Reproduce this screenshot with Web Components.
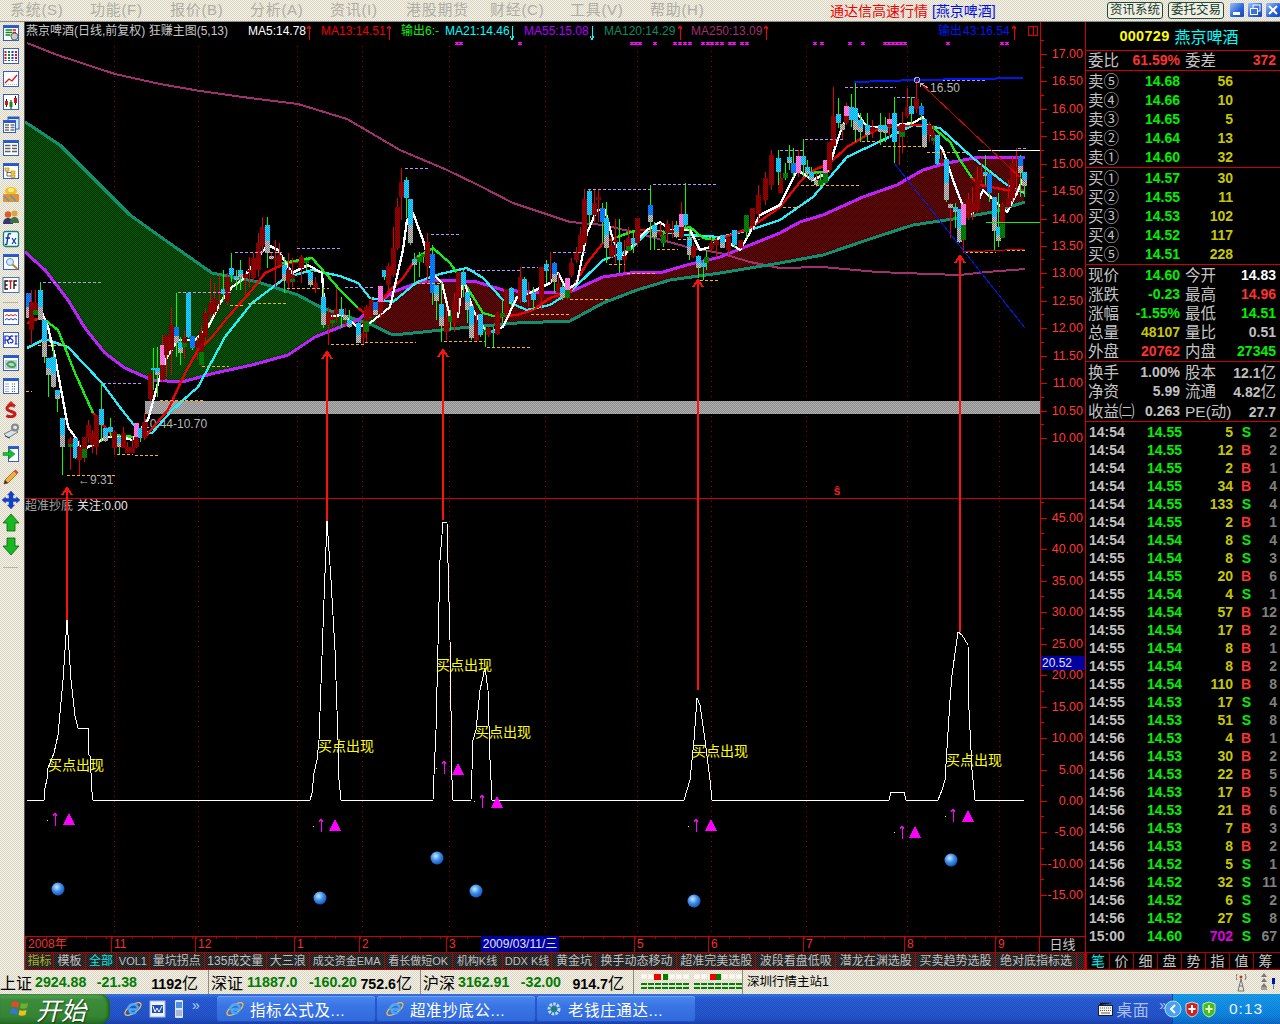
<!DOCTYPE html>
<html lang="zh"><head><meta charset="utf-8"><title>通达信</title>
<style>
html,body{margin:0;padding:0;background:#000;overflow:hidden}
body{width:1280px;height:1024px;font-family:"Liberation Sans","Noto Sans CJK SC",sans-serif}
</style></head><body>
<tdx-app></tdx-app>
<script>
const CJK='"Liberation Sans","Noto Sans CJK SC",sans-serif';
const SANS='"Liberation Sans","Noto Sans CJK SC",sans-serif';
const DITHER='repeating-conic-gradient(#f6f3e6 0 25%,#d9d5c5 0 50%) 0 0/2px 2px';
function def(name,css,html,init){
  customElements.define(name,class extends HTMLElement{
    connectedCallback(){
      if(this.shadowRoot)return;
      const r=this.attachShadow({mode:'open'});
      r.innerHTML='<style>'+css+'</style>'+(typeof html==='function'?html(this):html);
      if(init)init(r,this);
    }
  });
}

/* ---------- menu ---------- */
def('menu-item',`:host{display:block;width:80px;font:15px ${CJK};color:#aeaea4;white-space:nowrap;line-height:20px;letter-spacing:.7px}`,'<slot></slot>');
def('win-btn',`:host{display:block;width:16px;height:16px;border-radius:2px;background:linear-gradient(135deg,#9cc0f4,#2a62d8 60%,#1a46b0);border:1px solid #dfe6f0;box-sizing:border-box}svg{display:block}`,
 h=>{const k=h.getAttribute('k');const d={min:'<rect x="3" y="9" width="7" height="3" fill="#fff"/>',max:'<rect x="5" y="2" width="7" height="6" fill="none" stroke="#fff"/><rect x="2.5" y="5.5" width="7" height="6" fill="#3a70e0" stroke="#fff"/>',cls:'<path d="M3 3l8 8M11 3l-8 8" stroke="#fff" stroke-width="2"/>'}[k];return `<svg width="14" height="14" viewBox="0 0 14 14">${d}</svg>`});
def('menu-button',`:host{display:block;width:56px;height:17px;box-sizing:border-box;border:1px solid #1c4a3c;border-radius:3px;font:12.5px/15px ${CJK};color:#143c30;text-align:center;white-space:nowrap;background:#f2efe2}`,'<slot></slot>');
def('app-menubar',`:host{display:flex;align-items:center;height:22px;box-sizing:border-box;background:${DITHER};border-bottom:1px solid #8c8c84;padding:0 0 1px 10px}
 .m{display:flex}.t{width:277px;font:14px ${CJK};color:#f00000;white-space:nowrap}.t b{font-weight:400;color:#0010e0}
 .b{display:flex;gap:5px;margin-right:5px}.w{display:flex;gap:2px}`,
 `<div class="m"><menu-item>系统(S)</menu-item><menu-item>功能(F)</menu-item><menu-item>报价(B)</menu-item><menu-item>分析(A)</menu-item><menu-item>资讯(I)</menu-item><menu-item style="margin-left:-4px;margin-right:4px">港股期货</menu-item><menu-item>财经(C)</menu-item><menu-item>工具(V)</menu-item><menu-item>帮助(H)</menu-item></div>
 <div class="t" style="margin-left:100px;">通达信高速行情 <b>[燕京啤酒]</b></div>
 <div class="b"><menu-button>资讯系统</menu-button><menu-button>委托交易</menu-button></div>
 <div class="w"><win-btn k="min"></win-btn><win-btn k="max"></win-btn><win-btn k="cls"></win-btn></div>`);

/* ---------- toolbar icons ---------- */
const WIN='<rect x="1.5" y="1.5" width="15" height="15" fill="#fff" stroke="#3060d0"/><rect x="2" y="2" width="14" height="2" fill="#2858c8"/>';
const ICONS={
 list:`${WIN}<path d="M3.5 6h7M3.5 8.500h7M3.5 11h5" stroke="#0a8a20" stroke-width="1.500"/><path d="M11 6h3M11 8.500h3" stroke="#e01010" stroke-width="1.500"/><circle cx="12.500" cy="12.500" r="3.500" fill="#c8c8c8" stroke="#606060"/>`,
 grid:`<rect x="1.500" y="1.500" width="15" height="15" fill="#fff" stroke="#3060d0"/><path d="M3.500 4v10" stroke="#e01010" stroke-width="2" stroke-dasharray="2 1"/><path d="M7 4v10" stroke="#0a8a20" stroke-width="2" stroke-dasharray="2 1"/><path d="M10.500 4v10" stroke="#2030e0" stroke-width="2" stroke-dasharray="2 1"/><path d="M14 4v10" stroke="#e01010" stroke-width="2" stroke-dasharray="2 1"/>`,
 line:`<rect x="1.500" y="1.500" width="15" height="15" fill="#fff" stroke="#3060d0"/><path d="M3 13l4-4 3 2 5-6" fill="none" stroke="#e01010" stroke-width="1.300"/><path d="M2 14.500h14" stroke="#c0c0c0" stroke-dasharray="1 1"/>`,
 kline:`<rect x="1.500" y="1.500" width="15" height="15" fill="#fff" stroke="#3060d0"/><path d="M4.500 6v8M9 7v9M13.500 3v9" stroke="#111"/><rect x="3" y="8" width="3" height="4" fill="#e01010"/><rect x="7.500" y="9" width="3" height="5" fill="#0a8a20"/><rect x="12" y="5" width="3" height="5" fill="#e01010"/>`,
 wins:`<rect x="6" y="1" width="11" height="12" fill="#d8e8ff" stroke="#3060d0"/><rect x="6" y="1" width="11" height="2" fill="#2858c8"/><rect x="1.500" y="4.500" width="12" height="12" fill="#fff" stroke="#3060d0"/><rect x="2" y="5" width="11" height="2" fill="#2858c8"/><path d="M3 9h4M8.500 9h4M3 11.500h4M8.500 11.500h4M3 14h4M8.500 14h4" stroke="#707070" stroke-width="1.300"/>`,
 table:`${WIN}<path d="M3 6.500h5.500M10 6.500h5M3 9.500h5.500M10 9.500h5M3 12.500h5.500M10 12.500h5" stroke="#606060" stroke-width="1.600"/>`,
 tree:`${WIN}<rect x="3" y="6" width="4" height="3" fill="#f8d040" stroke="#b08000" stroke-width=".6"/><rect x="9" y="9" width="4" height="3" fill="#f8d040" stroke="#b08000" stroke-width=".6"/><rect x="9" y="13" width="4" height="2.500" fill="#f8d040" stroke="#b08000" stroke-width=".6"/><path d="M5 9v5h4M5 10.500h4" stroke="#303030" fill="none" stroke-width=".7"/>`,
 gold:`<ellipse cx="9" cy="6" rx="6" ry="4" fill="#f4c020"/><ellipse cx="9" cy="5" rx="3" ry="2" fill="#ffe880"/><rect x="1" y="9" width="16" height="8" rx="1" fill="#e89030"/><path d="M2 11l5 5M8 10l6 6" stroke="#40a0e0" stroke-width="1.500"/>`,
 people:`<circle cx="6" cy="6.500" r="3.200" fill="#d86020"/><path d="M1 16c0-4 2-6 5-6s5 2 5 6z" fill="#303870"/><circle cx="12.500" cy="5.500" r="3" fill="#e0a040"/><path d="M8 15c0-4 2-6 4.500-6s4.500 2 4.500 6z" fill="#407040"/>`,
 fx:`<rect x="1.500" y="1.500" width="15" height="15" rx="2" fill="#f4fff8" stroke="#108070" stroke-width="1.300"/><path d="M9 4c-2-1-3 0-3 2l-1 7c0 2-1 2-2 1M3.500 8H8" fill="none" stroke="#1030c0" stroke-width="1.400"/><path d="M10 8l4 6M14 8l-4 6" stroke="#1030c0" stroke-width="1.200"/>`,
 search:`${WIN}<circle cx="8" cy="9" r="3.500" fill="#d0ecff" stroke="#6090c0"/><path d="M10.500 11.500l5 4.500" stroke="#c08020" stroke-width="2"/>`,
 etf:`<rect x="1" y="1.500" width="16" height="15" fill="#fff" stroke="#4070c0"/><path d="M6 5H3v8h3M3 9h2.500" fill="none" stroke="#111" stroke-width="1.300"/><path d="M6.500 5h4M8.500 5v8" stroke="#e01010" stroke-width="1.400"/><path d="M15 5h-3v8M12 9h2.500" fill="none" stroke="#111" stroke-width="1.300"/>`,
 wave:`${WIN}<path d="M3 8l2-1.500 2 1.500 2-1.500 2 1.500 2-1.500 2 1.500" fill="none" stroke="#e01010"/><path d="M3 12l2-1.500 2 1.500 2-1.500 2 1.500 2-1.500 2 1.500" fill="none" stroke="#2030e0"/>`,
 rsi:`<rect x="1.500" y="1.500" width="15" height="15" fill="#fff" stroke="#3060d0"/><path d="M3 13V5h2.500a2 2 0 010 4H3M5 9l2 4M11 5.500c-1-1-3-.5-3 1 0 2 3 1.500 3 3.500 0 1.500-2 2.500-3 1M12.500 5h3M14 5v8M12.500 13h3" fill="none" stroke="#1020d0" stroke-width="1.200"/>`,
 recycle:`${WIN}<rect x="3" y="6" width="12" height="9" fill="#b8d0e0"/><path d="M5 10c2-3 6-3 8 0s-5 5-8 0z" fill="none" stroke="#40a040" stroke-width="1.800"/>`,
 cells:`${WIN}<path d="M3.500 7h4M10 7h4M3.500 9.500h4M10 9.500h4M3.500 12h4M10 12h4M3.500 14.500h4M10 14.500h4" stroke="#3060d0" stroke-dasharray="1 1"/>`,
 dollar:`<path d="M9 1l4 4H5z" fill="#e02020"/><path d="M13 6.500C11 5 5 5 5 8.500s8 2.500 8 5.500-6 3.500-8.500 1.500" fill="none" stroke="#c81818" stroke-width="3"/><path d="M13 7C11 6 6 6 6 8.500" fill="none" stroke="#808080" stroke-width=".7"/>`,
 tools:`<path d="M2 11l10-5 4 3-10 6z" fill="#d8e0e8" stroke="#707880"/><circle cx="13" cy="4.500" r="3" fill="none" stroke="#808890" stroke-width="2"/><path d="M3 13l5 2" stroke="#304060"/>`,
 enter:`<rect x="6.500" y="1.500" width="10" height="15" fill="#fff" stroke="#3060d0"/><rect x="7" y="2" width="9" height="2" fill="#2858c8"/><path d="M1 7.500h6V4l6 5-6 5v-3.500H1z" fill="#10c030" stroke="#088018" stroke-width=".5"/>`,
 pencil:`<path d="M2 16l1-4 9-9 3 3-9 9z" fill="#f0b040" stroke="#905010" stroke-width=".7"/><path d="M12 3l3 3 1.500-1.500-3-3z" fill="#e04040"/><path d="M2 16l1-4 3 3z" fill="#303030"/>`,
 move:`<path d="M9 0l3.500 4H11v3.500h3.500V6L18 9l-3.500 3v-1.500H11V14h1.500L9 18l-3.500-4H7v-3.500H3.500V12L0 9l3.500-3v1.500H7V4H5.500z" fill="#1040d0" stroke="#103090" stroke-width=".4"/>`,
 up:`<path d="M9 0l8 9h-4v8H5V9H1z" fill="#18b820" stroke="#0a6010" stroke-width=".8"/>`,
 down:`<path d="M9 18l8-9h-4V1H5v8H1z" fill="#18b820" stroke="#0a6010" stroke-width=".8"/>`
};
def('tool-icon',`:host{display:flex;height:22.900px;align-items:center;justify-content:center}svg{display:block}`,
 h=>`<svg width="18" height="18" viewBox="0 0 18 18">${ICONS[h.getAttribute('k')]}</svg>`);
const T1=['list','grid','line','kline','wins','table','tree','gold','people','fx','search','etf'],
      T2=['wave','rsi','recycle','cells','dollar','tools','enter','pencil','move','up','down'];
def('tool-strip',`:host{display:block;width:24px;background:${DITHER};border-right:1px solid #555;padding-right:0;box-sizing:content-box;padding-top:0}
 .s{height:8px;margin:0 3px 0;border-bottom:1px solid #b8b4a0;transform:translateY(-3px)}.w{padding-right:3px}`,
 `<div class="w">${T1.map(k=>`<tool-icon k="${k}"></tool-icon>`).join('')}<div class="s"></div>${T2.map(k=>`<tool-icon k="${k}"></tool-icon>`).join('')}<div class="s" style="transform:translateY(2px)"></div></div>`);

/* ---------- chart ---------- */
const MA250=[[27,43],[60,56],[115,74],[160,84],[200,91],[250,98],[298,104],[347,119],[400,150],[447,170],[480,186],[513,203],[570,222],[603,225],[637,233],[687,247],[720,253],[750,262],[780,268],[823,267],[877,272],[930,274],[960,275],[987,272],[1025,269]];
const MA120=[[25,122],[60,145],[100,185],[130,215],[165,240],[212,273],[258,282],[298,295],[322,308],[372,325],[393,335],[423,332],[460,328],[517,323],[570,321],[603,303],[637,290],[670,280],[720,273],[780,263],[823,255],[873,238],[913,225],[953,219],[993,212],[1025,202]];
const MA55=[[25,252],[45,270],[68,300],[85,328],[105,353],[125,368],[152,380],[182,382],[215,373],[252,365],[288,355],[315,337],[358,320],[375,305],[393,292],[417,283],[440,280],[477,282],[503,290],[543,293],[570,292],[603,277],[630,273],[663,272],[687,265],[720,257],[780,233],[800,222],[823,215],[863,197],[897,185],[923,170],[947,163],[980,157],[1025,158]];
const MA21=[[27,348],[45,339],[68,347],[85,365],[102,383],[122,410],[138,430],[152,433],[172,410],[198,387],[225,337],[252,303],[285,278],[312,270],[340,276],[358,283],[370,298],[393,302],[417,282],[440,274],[467,268],[483,278],[503,300],[527,310],[550,305],[570,292],[603,260],[630,250],[650,230],[687,235],[720,237],[750,230],[780,220],[813,197],[847,157],[883,140],[913,125],[940,128],[973,158],[1007,185],[1025,193]];
const MA13=[[27,323],[40,318],[45,320],[58,330],[75,373],[93,413],[112,435],[135,437],[145,437],[168,410],[185,373],[198,350],[212,337],[228,317],[252,290],[265,273],[282,265],[312,258],[340,290],[358,308],[370,317],[390,290],[403,278],[417,257],[433,248],[450,263],[467,287],[483,313],[497,317],[517,315],[533,310],[550,298],[570,292],[587,263],[603,243],[617,237],[637,230],[650,230],[663,233],[690,227],[703,238],[717,240],[750,228],[780,207],[800,182],[808,173],[830,163],[847,147],[867,135],[880,128],[913,125],[930,125],[950,142],[960,160],[972,178],[980,185],[1007,190],[1025,190]];
const G13=[[[45,320],[58,330],[75,373],[93,413]],[[112,435],[135,437]],[[282,263],[312,258],[340,290],[358,308]],[[417,257],[433,248],[450,263],[467,287],[483,313],[497,317]],[[617,237],[637,230]],[[663,233],[690,227],[703,238],[717,240]],[[808,173],[825,172]],[[930,125],[950,142],[960,160],[972,178]]];
const MA5=[[40,308],[48,327],[55,357],[63,400],[68,427],[75,437],[82,450],[108,437],[122,437],[132,440],[148,420],[158,383],[167,357],[178,340],[195,340],[208,327],[222,300],[232,287],[242,280],[258,257],[268,245],[278,250],[292,273],[308,265],[322,273],[325,317],[342,315],[358,327],[370,323],[390,307],[403,250],[407,220],[413,213],[423,240],[432,273],[442,283],[450,317],[458,317],[463,277],[473,310],[487,333],[503,327],[517,297],[530,293],[550,283],[558,273],[567,290],[577,283],[587,233],[597,210],[605,210],[613,240],[623,257],[637,240],[647,230],[660,222],[670,230],[690,230],[700,250],[710,247],[720,237],[740,250],[760,215],[780,205],[797,170],[813,180],[827,173],[840,133],[847,117],[857,113],[867,127],[880,127],[913,123],[923,117],[930,133],[943,150],[953,180],[967,217],[973,213],[983,190],[997,203],[1007,212],[1017,193],[1025,173]];
const LOW=[[27,800],[44,800],[45,788],[47,779],[48,768],[52,758],[54,753],[58,735],[63,680],[67,620],[71,680],[75,716],[78,728],[88,728],[89,755],[90,756],[91,773],[92,792],[93,800],[310,800],[312,793],[314,773],[317,760],[319,740],[324,600],[327,521],[331,580],[335,650],[338,740],[339,780],[341,800],[433,800],[434,775],[436,730],[440,560],[443,522],[447,523],[450,640],[452,780],[453,800],[471,800],[473,740],[476,730],[480,690],[485,668],[488,690],[490,760],[492,800],[684,800],[690,780],[694,740],[697,698],[700,705],[705,740],[710,780],[712,800],[889,800],[891,792],[904,792],[906,800],[938,800],[942,790],[945,780],[950,700],[952,675],[958,632],[962,635],[968,645],[969,710],[972,770],[975,800],[1024,800]];
const C9=[[8,160,235,'bg'],[18,185,270,'r',150,315],[31,190,225,'rg',150,225],[46,150,240,'cg',125,240],[58,240,350,'cg'],[70,355,405,'cg',355,470],[85,350,440,'cg',310,445],[97,450,478,'cg',450,515],[112,535,622,'cg',535,705],[136,598,622,'rg',590,690],[150,595,655,'c'],[162,620,660,'r',600,705],[176,590,655,'rg'],[190,555,595,'r',540,610],[202,580,615,'r',570,640],[214,525,620,'r',525,645],[229,508,555,'c',430,605],[241,565,602,'cg',565,605],[254,560,575,'c',535,590],[268,575,625,'r',570,645],[281,590,622,'cg',588,645],[293,580,625,'r',560,625],[306,622,638,'r',605,640],[320,620,640,'r',590,640],[334,550,620,'pr'],[346,565,595,'c',565,605],[358,545,595,'r',520,600],[374,400,478,'r'],[385,383,388,'c',325,450],[397,385,405,'cg',320,470],[412,315,420,'pr',285,425],[424,285,345,'r',285,410],[437,255,330,'r',200,405],[452,262,310,'bg',160,350],[464,305,340,'cg',290,375],[478,295,320,'rg',270,358],[490,158,290,'c',158,295],[502,288,325,'b',288,330],[516,305,325,'r',290,360],[529,280,375,'rg',258,380],[541,220,290,'r',205,315],[555,190,225,'r',115,240],[568,178,215,'r',130,225],[581,155,158,'r',105,210],[594,148,162,'c',90,180],[607,110,185,'r',100,195],[619,85,105,'c',38,125],[634,108,120,'cg',90,150],[646,90,110,'cg',60,150],[659,102,115,'r',100,170],[672,90,95,'r',50,140],[685,55,115,'r',40,130],[700,10,90,'r',-20,110],[712,-40,15,'r',-70,40],[725,-45,40,'cg',-70,85],[738,47,57,'w',40,60],[751,55,60,'r',0,140],[763,45,75,'r',10,85],[778,75,122,'cg',50,160],[790,90,130,'r',40,150],[802,105,125,'rg',55,140],[829,52,85,'r',45,130],[843,60,70,'g',50,90],[856,95,135,'cg',90,140],[870,130,145,'r',110,160],[895,170,255,'cg',140,265],[908,218,255,'r',200,315],[921,230,250,'rg',215,260],[933,208,222,'r',145,250],[947,208,225,'c',170,265],[961,225,240,'w',205,260],[973,240,262,'cg',210,265],[1000,250,308,'cg',245,310],[1013,280,295,'r',240,315],[1024,200,275,'rg',195,305],[1037,180,230,'r',170,235]];
const C12=[[16,455,495,'bg'],[31,408,490,'pr'],[41,360,380,'c'],[55,348,405,'r',340,420],[70,293,375,'r',230,380],[82,170,293,'r',145,300],[94,95,140,'r',55,210],[109,90,145,'c',80,205],[121,148,280,'cg',148,285],[133,328,345,'cg',310,400],[148,320,335,'g',305,380],[160,312,320,'g'],[172,277,347,'r',250,400],[187,312,428,'b',285,465],[199,405,452,'cg',405,510],[214,462,528,'cg',395,575],[227,505,545,'r',470,570],[239,498,515,'g',480,540],[253,450,520,'r',430,545],[265,365,445,'r',365,490],[279,365,405,'c',360,440],[292,427,480,'cg',425,520],[304,468,565,'cg',468,570],[317,520,570,'r',490,575],[331,492,555,'c',492,560],[344,540,545,'g',530,590],[355,535,555,'r',530,560],[370,540,548,'c',530,590],[382,490,552,'r',485,555],[396,490,500,'g',450,520],[409,418,490,'r'],[422,415,455,'c',410,470],[449,382,450,'r',350,460],[461,387,455,'c',380,460],[475,435,450,'r',395,470],[488,428,450,'c',410,480],[514,352,445,'r',350,480],[527,342,362,'c',330,400],[540,350,352,'r',305,400],[553,340,395,'bg',335,430],[565,400,430,'r',370,445],[577,412,445,'cg',400,450],[592,385,443,'pg',385,450],[604,340,375,'r',325,380],[618,310,330,'r',290,340],[630,255,305,'r',230,310],[643,148,280,'r',118,285],[658,123,195,'c',118,225],[671,160,195,'r',120,215],[683,142,150,'r',120,215],[697,175,215,'b',160,280],[709,205,295,'cg',155,340],[722,285,320,'r',260,325],[734,270,275,'r',208,340],[748,275,330,'c',208,370],[761,318,330,'r',270,365],[775,265,303,'rg',230,310],[789,265,282,'c',240,310],[802,204,280,'r',204,290],[841,165,215,'bg',105,300],[853,225,262,'cg',215,300],[869,245,255,'r',220,260],[880,255,280,'g',240,290],[892,222,250,'r',210,270],[905,240,250,'r',212,265],[918,225,260,'cg',212,265],[932,192,260,'pr',155,265],[945,192,225,'c',100,235],[958,262,315,'cg',235,330],[970,287,320,'r',280,325],[985,318,353,'cg',315,385],[998,340,352,'c',330,390],[1009,320,340,'g',300,360],[1024,278,298,'r',260,310],[1037,270,285,'r',260,320]];
const C10=[[0,325,370,'r',290,370],[16,310,325,'g',280,330],[28,262,280,'cg',225,300],[40,280,310,'b',235,320],[55,258,310,'p',240,320],[68,258,285,'c',208,320],[80,290,312,'cg',270,320],[94,305,330,'cg',290,335],[107,330,345,'w',310,350],[120,330,345,'g',305,350],[134,270,340,'pg',270,345],[146,215,300,'r',215,310],[160,137,228,'r',50,235],[173,132,160,'c',85,175],[185,162,180,'w',160,210],[199,108,160,'pr',100,165],[212,110,150,'c',72,170],[224,115,180,'cg',37,215],[239,150,185,'cg',130,215],[262,165,195,'cg',130,215],[275,172,185,'r',150,205],[301,165,185,'cg',130,225],[316,165,188,'cg',140,215],[328,147,172,'pr',130,205],[343,130,215,'c',80,280],[356,172,180,'r',165,285],[367,162,200,'rg',125,250],[382,112,137,'r',55,145],[394,108,132,'c',80,165],[407,88,118,'r',30,130],[422,108,135,'b',100,150],[433,147,232,'cg',147,235],[447,165,195,'r',155,215],[460,190,213,'rg',165,225],[472,195,282,'c',195,285],[484,268,280,'r',240,285],[499,268,390,'cg',268,395],[511,402,415,'w',400,505],[526,412,425,'cg',400,475],[537,418,515,'cg',418,520],[550,402,510,'pg',395,550],[565,388,445,'r',370,450],[577,400,425,'r',350,450],[590,330,420,'r',290,425],[604,310,330,'r',280,340],[616,305,318,'cg',255,345],[628,312,370,'b',300,395],[643,382,482,'cg',380,540],[655,470,512,'cg',370,530],[667,402,503,'rg',400,505],[683,385,412,'r',330,415],[695,280,385,'r',260,395],[709,290,300,'r',235,360],[721,262,308,'bg',255,380],[733,307,347,'cg',305,380]];
const CX=[[722,235,248,'cg'],[728,238,250,'r'],[734,230,245,'c'],[740,240,248,'r'],[746,215,232,'g'],[752,208,226,'r'],[758,195,214,'r',185,220],[765,178,200,'r',172,205],[771,155,185,'r',150,190],[778,158,172,'c',150,185]];
const PURPLE=[[43,103,282],[103,143,383],[178,232,292],[235,282,252],[297,342,248],[345,375,287],[405,429,168],[431,460,234],[467,520,270],[522,538,267],[553,586,252],[588,652,189],[653,717,184],[780,803,150],[805,843,139],[845,896,87],[897,917,97],[917,987,80],[1018,1026,148]];
const ORANGE=[[38,68,345],[26,32,391],[67,116,475],[117,133,454],[135,159,455],[160,203,400],[202,229,366],[230,245,305],[248,287,303],[287,329,288],[331,364,344],[365,416,342],[417,443,283],[444,485,341],[487,530,347],[531,569,314],[570,608,299],[609,625,264],[627,657,273],[657,678,249],[678,700,239],[700,720,280],[783,800,207],[801,861,185],[862,883,141],[883,926,146],[927,965,152],[965,996,252],[997,1026,250]];
const GRID=[114,198,297,362,449,545,637,711,806,907,999];
const XM=[457,461,520,632,636,640,655,675,680,685,690,703,708,712,717,722,730,734,742,747,815,822,850,863,885,889,893,897,901,905,948,1002,1007];
const SIG=[[47,820,55,813,69,813],[313,826,321,819,335,819],[436,768,444,761,458,763],[474,801,482,795,497,796],[688,826,696,819,711,819],[894,832,902,826,915,826],[945,816,953,809,968,810]];
const BALLS=[[58,889],[320,898],[437,858],[476,891],[694,901],[951,860]];
const BUY=[[48,765],[318,746],[436,665],[475,732],[692,751],[946,760]];
const ARROWS=[[67,488,620],[327,352,521],[443,350,520],[698,280,690],[960,256,632]];
const pts=a=>a.map(p=>p.join(',')).join(' ');
const pl=(a,c,w)=>`<polyline points="${pts(a)}" fill="none" stroke="${c}" stroke-width="${w}" stroke-linejoin="round"/>`;
function pat(id,a,b){return `<pattern id="${id}" width="2" height="2" patternUnits="userSpaceOnUse"><rect width="2" height="2" fill="${a}"/><rect width="1" height="1" fill="${b}"/><rect x="1" y="1" width="1" height="1" fill="${b}"/></pattern>`}
const FILL={c:'url(#pc)',b:'url(#pb)',w:'url(#pw)',r:'url(#pr)',g:'url(#pg)',p:'url(#pp)'};
function candles(list,ox,oy,scale){
 let out='';
 list.forEach((c,i)=>{
  const x=Math.round(ox+c[0]/scale),t=Math.round(oy+c[1]/scale),b=Math.round(oy+c[2]/scale),ty=c[3];
  const wt=c.length>4?oy+c[4]/scale:t-(i*7%7),wb=c.length>5?oy+c[5]/scale:b+(i*5%7);
  const wc=/^[cbg]/.test(ty)?'#00ff00':'#e00000';
  out+=`<line x1="${x}" x2="${x}" y1="${Math.round(wt)}" y2="${Math.round(wb)}" stroke="${wc}"/>`;
  const h=Math.max(b-t,2);
  const two={cg:['c','w'],bg:['b','w'],rg:['r','g'],pr:['p','r'],pg:['p','g']}[ty];
  if(two){const m=Math.round(h*.58);
    out+=`<rect x="${x-2}" y="${t}" width="5" height="${m}" fill="${FILL[two[0]]}"/><rect x="${x-2}" y="${t+m}" width="5" height="${h-m}" fill="${FILL[two[1]]}"/>`;
  } else out+=`<rect x="${x-2}" y="${t}" width="5" height="${h}" fill="${FILL[ty]}"/>`;
 });
 return out;
}
function arrowUp(x,y,c,w){return `<path d="M${x-5} ${y+7}L${x} ${y}L${x+5} ${y+7}" fill="none" stroke="${c}" stroke-width="${w}"/>`}
function upperTicks(){let s='';for(let i=0;i<=14;i++){const p=10+i*.5,y=Math.round(438-i*27.43);
  s+=`<line x1="1041" x2="1047" y1="${y}" y2="${y}" stroke="#e00000"/><line x1="1041" x2="1044" y1="${y-14}" y2="${y-14}" stroke="#e00000"/><text x="1083" y="${y+4}" text-anchor="end" class="ax">${p.toFixed(2)}</text>`;}
  return s}
function lowerTicks(){let s='';for(let v=-15;v<=45;v+=5){const y=Math.round(801-v*6.29);
  s+=`<line x1="1041" x2="1047" y1="${y}" y2="${y}" stroke="#e00000"/><line x1="1041" x2="1044" y1="${y-16}" y2="${y-16}" stroke="#e00000"/><text x="1083" y="${y+4}" text-anchor="end" class="ax">${v.toFixed(2)}</text>`;}
  return s}
function areaBetween(a,b,x0,x1){
 const f=(arr,x)=>{for(let i=1;i<arr.length;i++)if(x<=arr[i][0]){const p=arr[i-1],q=arr[i];return p[1]+(q[1]-p[1])*(x-p[0])/(q[0]-p[0])}return arr[arr.length-1][1]};
 const top=[],bot=[];for(let x=x0;x<=x1;x+=3){top.push([x,f(a,x).toFixed(1)]);bot.unshift([x,f(b,x).toFixed(1)])}
 return pts(top.concat(bot));
}
function chartSVG(){
 const head=[[248,'MA5:14.78','#fff'],[321,'MA13:14.51','#f00000'],[445,'MA21:14.46','#00ffff'],[524,'MA55:15.08','#b000ff'],[604,'MA120:14.29','#108a60'],[691,'MA250:13.09','#a03070'],[963,'43:16.54','#0018f0']];
 const arrowsH=[[309,'#f00000',1],[389,'#f00000',1],[512,'#00ffff',0],[592,'#00ffff',0],[680,'#f00000',1],[766,'#f00000',1],[1014,'#f00000',1]];
 return `<svg width="1060" height="914" viewBox="25 22 1060 914" shape-rendering="crispEdges">
 <defs>${pat('pc','#00a8f0','#30d8ff')}${pat('pb','#0060f0','#0090ff')}${pat('pw','#808080','#c8c8c8')}${pat('pr','#a00000','#700000')}${pat('pg','#006800','#008c00')}${pat('pp','#ff50d0','#ff90e8')}${pat('fg','#003000','#065a06')}${pat('fr','#300000','#700606')}${pat('band','#888888','#b4b4b4')}
 <radialGradient id="ball" cx=".4" cy=".35" r=".8"><stop offset="0" stop-color="#c8e8ff"/><stop offset=".45" stop-color="#3c8ce8"/><stop offset=".8" stop-color="#1858c0"/><stop offset="1" stop-color="#60d0ff"/></radialGradient></defs>
 <rect x="25" y="22" width="1060" height="914" fill="#000"/>
 ${GRID.map(x=>`<line x1="${x}" x2="${x}" y1="46" y2="936" stroke="#a00000" stroke-dasharray="1 4"/>`).join('')}
 <polygon points="${areaBetween(MA120,MA55,25,376)}" fill="url(#fg)"/>
 <polygon points="${areaBetween(MA55,MA120,376,1026)}" fill="url(#fr)"/>
 <rect x="145" y="401" width="895" height="13" fill="url(#band)"/>
 <text x="143" y="428" class="lb" fill="#b8b8b8" font-size="12.500">10.44-10.70</text>
 ${pl(MA250,'#a03070',2)}
 ${pl(MA120,'#109070',3)}
 ${pl(MA55,'#c020ff',3)}
 ${pl(MA21,'#20f0ff',2.300)}
 ${pl(MA13,'#f00000',2.300)}
 ${G13.map(s=>pl(s,'#10f010',2.300)).join('')}
 ${pl(MA5,'#ffffff',2.300)}
 ${candles(C9,25,240,3)}${candles(C12,370,150,3)}${candles(C10,780,70,3)}${candles(CX,0,0,1)}
 ${PURPLE.map(d=>`<line x1="${d[0]}" x2="${d[1]}" y1="${d[2]}" y2="${d[2]}" stroke="#c090ff" stroke-dasharray="3 2"/>`).join('')}
 ${ORANGE.map(d=>`<line x1="${d[0]}" x2="${d[1]}" y1="${d[2]}" y2="${d[2]}" stroke="#ffb020" stroke-dasharray="3 2"/>`).join('')}
 <line x1="978" x2="1040" y1="150" y2="150" stroke="#fff"/>
 <line x1="986" x2="1040" y1="222" y2="222" stroke="#10f010"/>
 <polyline points="854,82 917,80 1023,78" fill="none" stroke="#0018e8" stroke-width="2"/>
 <line x1="917" y1="80" x2="1025" y2="182" stroke="#e00000"/>
 <line x1="894" y1="163" x2="1025" y2="328" stroke="#0018e8"/>
 <line x1="965" y1="252" x2="1025" y2="249" stroke="#e00000"/>
 <circle cx="917" cy="80" r="2.500" fill="none" stroke="#a0a8f0"/>
 <path d="M920 83l8 5M920 83h4M920 83v4" stroke="#b8b8b8" fill="none"/>
 <text x="930" y="92" class="lb" fill="#b8b8b8" font-size="13">16.50</text>
 <text x="78" y="484" class="lb" fill="#b0b0b0" font-size="13">←9.31</text>
 ${XM.map(x=>`<path d="M${x-1.500} 42l3 3M${x+1.500} 42l-3 3" stroke="#ff00ff" stroke-width="1.200"/>`).join('')}
 <text x="26" y="35" class="lb" fill="#c8c8c8">燕京啤酒(日线,前复权) 狂赚主图(5,13)</text>
 ${head.map(h=>`<text x="${h[0]}" y="35" class="lb" fill="${h[2]}">${h[1]}</text>`).join('')}
 <text x="401" y="35" class="lb" fill="#10f010">输出6:-</text>
 <text x="938" y="35" class="lb" fill="#0018f0">输出</text>
 ${arrowsH.map(a=>a[2]?`<path d="M${a[0]} 40V26M${a[0]-2} 29l2-3 2 3" stroke="${a[1]}" fill="none"/>`:`<path d="M${a[0]} 26V40M${a[0]-2} 36l2 4 2-4" stroke="${a[1]}" fill="none"/>`).join('')}
 <rect x="1028.500" y="26.500" width="9" height="9" fill="none" stroke="#e00000"/><line x1="1033" x2="1033" y1="27" y2="36" stroke="#e00000"/>
 <line x1="25" x2="1085" y1="498.500" y2="498.500" stroke="#d00000"/>
 <line x1="1040.500" x2="1040.500" y1="22" y2="936" stroke="#d00000"/>
 ${upperTicks()}${lowerTicks()}
 <rect x="1041" y="656" width="44" height="14" fill="#0000a0"/><text x="1042" y="667" class="lb" fill="#e0e0ff" font-size="12">20.52</text>
 <text x="837" y="495" class="lb" text-anchor="middle" fill="#f02020" font-size="13" font-weight="bold">ŝ</text>
 <text x="25" y="510" class="lb" fill="#a8a8a8">超准抄底</text><text x="77" y="510" class="lb" fill="#e8e8e8">关注:0.00</text>
 ${ARROWS.map(a=>`<line x1="${a[0]}" x2="${a[0]}" y1="${a[1]+1}" y2="${a[2]}" stroke="#ff1010" stroke-width="2"/>${arrowUp(a[0],a[1],'#ff1010',2)}`).join('')}
 ${pl(LOW,'#ffffff',1)}
 ${BUY.map(b=>`<text x="${b[0]}" y="${b[1]+5}" class="buy">买点出现</text>`).join('')}
 ${SIG.map(s=>`<rect x="${s[0]}" y="${s[1]}" width="1" height="1" fill="#ffff00"/><path d="M${s[2]} ${s[3]}v13M${s[2]-2} ${s[3]+3}l2-3 2 3" stroke="#ff00ff" fill="none"/><polygon points="${s[4]},${s[5]} ${s[4]+6},${s[5]+12} ${s[4]-6},${s[5]+12}" fill="#ff00ff"/>`).join('')}
 ${BALLS.map(b=>`<circle cx="${b[0]}" cy="${b[1]}" r="6.500" fill="url(#ball)" shape-rendering="auto"/>`).join('')}
 </svg>`;
}
def('kline-chart',`:host{display:block;width:1060px;height:914px;background:#000}
 svg{display:block}
 .lb,text{font-family:${SANS}}.lb{font-size:12px}.ax{font-size:12.500px;fill:#ff3838}
 .buy{font:14px ${CJK};fill:#ffff00}`,()=>chartSVG());

/* ---------- date row ---------- */
const DATES=[['2008年',86,0],['11',84,0],['12',99,0],['1',65,0],['2',87,0],['3',96,0],['',92,0],['5',74,0],['6',95,0],['7',101,0],['8',91,0],['9',41,0]];
def('date-strip',`:host{display:flex;height:16px;box-sizing:border-box;width:1060px;background:#000;color:#f03030;font:12px/15px ${SANS};position:relative;border-top:1px solid #d00000;border-bottom:0}
 .c{box-sizing:border-box;border-left:1px solid #c00000;padding-left:2px;white-space:nowrap;background:repeating-linear-gradient(90deg,#a00000 0 1px,transparent 1px 20px) 0 0/100% 2px no-repeat}
 .k{width:45px;border-left:1px solid #d00000;color:#c8c8c8;font:13px/15px ${CJK};text-align:center;margin-left:auto}
 .sel{position:absolute;left:456px;top:-1px;width:78px;height:16px;background:#0000a0;color:#e0e0ff;font:12px/16px ${SANS};text-align:center}`,
 `${DATES.map(d=>`<div class="c" style="width:${d[1]}px">${d[0]}</div>`).join('')}<div class="k">日线</div><div class="sel">2009/03/11/三</div>`);

/* ---------- formula tabs ---------- */
const TABS=[['指标',28,'#b0b020'],['模板',32],['全部',31,'#00e8e8'],['VOL1',33,'',11],['量坑拐点',55],['135成交量',62],['大三浪',43],['成交资金EMA',75,'',11],['看长做短OK',68,'',11],['机构K线',50,'',11],['DDX K线',50,'',11],['黄金坑',44],['换手动态移动',81],['超准完美选股',79],['波段看盘低吸',80],['潜龙在渊选股',80],['买卖趋势选股',80],['绝对底指标选',81],['',8]];
def('formula-tab',`:host{display:block;box-sizing:border-box;border-right:1px solid #b00000;background:repeating-conic-gradient(#383838 0 25%,#181818 0 50%) 0 0/2px 2px;color:#c0c0c0;font:12px/16px ${CJK};text-align:center;white-space:nowrap;overflow:hidden}`,'<slot></slot>');
def('formula-tabs',`:host{display:flex;height:18px;box-sizing:border-box;width:1060px;border-top:1px solid #b00000;border-bottom:1px solid #b00000;border-left:1px solid #b00000;background:#000}`,
 TABS.map(t=>`<formula-tab style="width:${t[1]}px;${t[2]?'color:'+t[2]+';':''}${t[3]?'font-size:'+t[3]+'px;':''}">${t[0]}</formula-tab>`).join(''));

/* ---------- quote panel ---------- */
const SELL=[['卖⑤','14.68','56'],['卖④','14.66','10'],['卖③','14.65','5'],['卖②','14.64','13'],['卖①','14.60','32']];
const BUYS=[['买①','14.57','30'],['买②','14.55','11'],['买③','14.53','102'],['买④','14.52','117'],['买⑤','14.51','228']];
const ST=[['现价','14.60','g','今开','14.83','w'],['涨跌','-0.23','g','最高','14.96','r'],['涨幅','-1.55%','g','最低','14.51','g'],['总量','48107','y','量比','0.51','s'],['外盘','20762','r','内盘','27345','g']];
const ST2=[['换手','1.00%','股本','12.1','亿'],['净资','5.99','流通','4.82','亿'],['收益㈡','0.263','PE(动)','27.7','']];
const TK=`14:54 14.55 5 S 2|14:54 14.55 12 B 2|14:54 14.55 2 B 1|14:54 14.55 34 B 4|14:54 14.55 133 S 4|14:54 14.55 2 B 1|14:54 14.54 8 S 4|14:55 14.54 8 S 3|14:55 14.55 20 B 6|14:55 14.54 4 S 1|14:55 14.54 57 B 12|14:55 14.54 17 B 2|14:55 14.54 8 B 1|14:55 14.54 8 B 2|14:55 14.54 110 B 8|14:55 14.53 17 S 4|14:55 14.53 51 S 8|14:56 14.53 4 B 1|14:56 14.53 30 B 2|14:56 14.53 22 B 5|14:56 14.53 17 B 5|14:56 14.53 21 B 6|14:56 14.53 7 B 3|14:56 14.53 8 B 2|14:56 14.52 5 S 1|14:56 14.52 32 S 11|14:56 14.52 6 S 2|14:56 14.52 27 S 8|15:00 14.60 702 S 67`.split('|').map(s=>s.split(' '));
def('quote-panel',`:host{display:flex;flex-direction:column;width:195px;height:930px;box-sizing:border-box;border-left:1px solid #d00000;background:#000;color:#c0c0c0;font:bold 14px/19px ${SANS}}
 .hd{height:29px;flex:none;box-sizing:border-box;display:flex;align-items:center;justify-content:center;gap:5px;padding-right:8px;border-bottom:1px solid #d00000;color:#ffff00;font-size:14.500px;letter-spacing:.3px}
 .hd span{font:16px ${CJK};color:#00ffff;letter-spacing:0}
 .sec{border-bottom:1px solid #d00000;flex:none}
 .r{display:grid;grid-template-columns:94px 99px;height:19px}
 .hf{display:flex;justify-content:space-between;padding-left:2px;white-space:nowrap}
 .hf+.hf{padding:0 3px 0 5px}
 .l{font:400 15.500px/19px ${CJK};color:#c4c4c4}
 .o{display:grid;grid-template-columns:94px 53px;height:19px}
 .g{color:#00f000}.y{color:#c8c800}.r2{color:#ff3232}.w{color:#fff}.s{color:#c0c0c0}
 .n{text-align:right}
 .yi{font:400 15.500px/19px ${CJK};color:#c4c4c4}
 .ticks{flex:1;padding-top:1px}
 .t{display:grid;grid-template-columns:42px 51px 51px 18px 26px;height:18px;line-height:18px;padding-left:3px}
 .t>:nth-child(2),.t>:nth-child(3),.t>:nth-child(5){text-align:right}
 .t>:nth-child(4){text-align:right}
 .t>:nth-child(5){color:#808080}.m{color:#e000e0}`,
 ()=>{
  const cl={g:'g',y:'y',r:'r2',w:'w',s:'s'};
  const o=a=>`<div class="o"><div class="hf"><span class="l">${a[0]}</span><span class="g">${a[1]}</span></div><div class="n y">${a[2]}</div></div>`;
  return `<div class="hd">000729 <span>燕京啤酒</span></div>
  <div class="sec"><div class="r"><div class="hf"><span class="l">委比</span><span class="r2">61.59%</span></div><div class="hf"><span class="l">委差</span><span class="r2">372</span></div></div></div>
  <div class="sec" style="padding-top:1px">${SELL.map(o).join('')}</div>
  <div class="sec" style="padding-top:1px">${BUYS.map(o).join('')}</div>
  <div class="sec" style="padding-top:1px">${ST.map(s=>`<div class="r"><div class="hf"><span class="l">${s[0]}</span><span class="${cl[s[2]]}">${s[1]}</span></div><div class="hf"><span class="l">${s[3]}</span><span class="${cl[s[5]]}">${s[4]}</span></div></div>`).join('')}</div>
  <div class="sec" style="padding:1px 0 0">${ST2.map(s=>`<div class="r" style="height:19.300px"><div class="hf"><span class="l">${s[0]}</span><span>${s[1]}</span></div><div class="hf"><span class="l">${s[2]}</span><span>${s[3]}<span class="yi">${s[4]}</span></span></div></div>`).join('')}</div>
  <div class="ticks">${TK.map(t=>`<div class="t"><span>${t[0]}</span><span class="g">${t[1]}</span><span class="${t[2]==='702'?'m':'y'}">${t[2]}</span><span class="${t[3]==='S'?'g':'r2'}">${t[3]}</span><span>${t[4]}</span></div>`).join('')}</div>`;
 });
def('side-tabs',`:host{display:grid;grid-template-columns:23px repeat(7,24px);height:18px;width:195px;box-sizing:border-box;border-top:1px solid #b00000;border-bottom:1px solid #b00000;border-right:0;border-left:1px solid #d00000;background:#000;color:#c8c8c8;font:14px/16px ${CJK};text-align:center}
 span{border-left:1px solid #b00000}span:first-child{border:0}b{font-weight:400;color:#00e8e8}`,
 `<span><b>笔</b></span><span>价</span><span>细</span><span>盘</span><span>势</span><span>指</span><span>值</span><span>筹</span>`);

/* ---------- status bar ---------- */
def('idx-item',`:host{display:flex;align-items:center;font:bold 14.200px ${SANS};color:#007c00;white-space:nowrap;box-sizing:border-box;height:24px;border-right:1px solid #8c8c84}
 .n{font:400 16px ${CJK};color:#000}.v{color:#000}.v i{font:400 16px ${CJK};font-style:normal}`,
 h=>{const [a,b,c,d,e]=h.getAttribute('d').split(' ');const w=h.getAttribute('w').split(',');
  return `<span class="n" style="width:${w[0]}px">${a}</span><span style="width:${w[1]}px">${b}</span><span style="width:${w[2]}px;text-align:right">${c}</span><span class="v" style="width:${w[3]}px;text-align:right">${d}<i>${e}</i></span>`});
const bars=(x,rx,gx)=>{let s='';for(let i=0;i<7;i++){s+=`<rect x="${x+i*7}" y="1" width="6" height="5" fill="#fbf9f0" stroke="#e8e4d4" stroke-width=".5"/><rect x="${x+i*7}" y="10" width="6" height="2" fill="#008000"/><rect x="${x+i*7}" y="14" width="6" height="2" fill="#008000"/>`}
 return s+`<rect x="${rx}" y="1" width="7" height="6" fill="#f00000"/><rect x="${gx}" y="1" width="5" height="6" fill="#008000"/>`};
def('status-bar',`:host{display:flex;height:24px;width:1280px;box-sizing:border-box;background:${DITHER};position:relative;align-items:center;font:13px ${CJK};color:#000;overflow:hidden}
 svg{display:block}.sv{margin-left:0;padding-left:4px;border-left:1px solid #8c8c84;height:24px;line-height:24px;white-space:nowrap;font-size:12.500px;flex:1}
 .ic{margin-right:4px}`,
 `<idx-item d="上证 2924.88 -21.38 1192 亿" w="35,50,52,61" style="width:209px"></idx-item>
  <idx-item d="深证 11887.0 -160.20 752.6 亿" w="36,48,62,55" style="width:212px;padding-left:2px"></idx-item>
  <idx-item d="沪深 3162.91 -32.00 914.7 亿" w="35,50,53,63" style="width:213px;padding-left:2px"></idx-item>
  <svg width="102" height="18" viewBox="0 0 102 18" style="margin-left:6px">${bars(1,14,23)}${bars(54,70,76)}</svg>
  <div class="sv">深圳行情主站1</div>
  <svg class="ic" width="40" height="20" viewBox="0 0 40 20"><path d="M5 7L2 19M5 7l3 12M3 14h4M2 19h6" stroke="#707070" fill="none"/><path d="M1 2a5 5 0 000 6M9 2a5 5 0 010 6" stroke="#707070" fill="none"/><circle cx="5" cy="5" r="1.500" fill="#c03020"/><path d="M25 5l3-4 3 4zM25 10l3-4 3 4zM25 15l3-4 3 4z" fill="#787870"/><path d="M25 15h6v3h-6z" fill="#a0a098"/><rect x="36" y="6" width="3" height="6" fill="#0010b0"/><rect x="37" y="12" width="1" height="5" fill="#7080a0"/></svg>`);

/* ---------- taskbar ---------- */
const IE=`<svg width="20" height="20" viewBox="0 0 20 20"><ellipse cx="10" cy="10" rx="9.500" ry="4" fill="none" stroke="#f0c040" stroke-width="1.300" transform="rotate(-35 10 10)"/><path d="M14.500 10.500H6.500a3.600 3.600 0 006.400 2.400M5 10a5 5 0 0110 .5" fill="none" stroke="#4aa8f4" stroke-width="2.400"/></svg>`;
def('task-button',`:host{display:flex;align-items:center;box-sizing:border-box;width:158px;height:26px;margin-right:2px;padding-left:8px;gap:5px;border-radius:3px;background:linear-gradient(#4a88f0,#3a74e4 40%,#3068dc);box-shadow:inset 0 1px 0 #6ea0f4,inset 0 -1px 0 #2050b8;color:#fff;font:15.500px ${CJK};white-space:nowrap;letter-spacing:.6px}svg{display:block;flex:none}`,
 h=>(h.getAttribute('i')==='gear'?`<svg width="18" height="18" viewBox="0 0 18 18"><circle cx="9" cy="9" r="5" fill="none" stroke="#b8e0e8" stroke-width="3" stroke-dasharray="2.500 1.200"/><circle cx="9" cy="9" r="2.500" fill="#208060"/></svg>`:IE)+'<slot></slot>');
def('task-bar',`:host{display:flex;align-items:center;width:1280px;height:30px;box-sizing:border-box;background:repeating-conic-gradient(rgba(0,0,40,.14) 0 25%,transparent 0 50%) 0 0/2px 2px,linear-gradient(#3a7ce8,#2a60dc 15%,#2456d0 80%,#1c44b0);font:15px ${CJK};color:#fff;overflow:hidden}
 .start{width:110px;height:30px;flex:none;box-sizing:border-box;display:flex;align-items:center;gap:6px;padding-left:10px;border-radius:0 10px 10px 0;background:linear-gradient(#58a858,#3c8c3c 20%,#348434 75%,#286c28);box-shadow:inset -2px 0 3px #1c5c1c;font:italic 25px ${CJK};text-shadow:1px 1px 1px #184018;white-space:nowrap}
 .ql{display:flex;align-items:center;gap:6px;padding-left:13px;width:107px;box-sizing:border-box}
 .chev{color:#b8d0f4;font-size:14px;margin:-8px 0 0 0}
 .tb{display:flex}
 .end{margin-left:auto;display:flex;align-items:center;height:30px}
 .desk{color:#a8c0e8;font-size:16px;margin:0 10px 0 6px;letter-spacing:.5px;white-space:nowrap}
 .tray{display:flex;align-items:center;gap:3px;height:30px;width:108px;box-sizing:border-box;padding-left:0;background:repeating-conic-gradient(rgba(0,0,60,.12) 0 25%,transparent 0 50%) 0 0/2px 2px,linear-gradient(#18a0f0,#0f88e4 70%,#0c6cc8);border-left:1px solid #0a48a8}
 .clock{margin-left:10px;font:15.500px ${SANS};color:#e8f4ff;letter-spacing:1px}svg{display:block}`,
 `<div class="start"><svg width="20" height="20" viewBox="0 0 20 20"><path d="M2 3c3-1 5 0 7 1L8 9C6 8 4 7 1 8z" fill="#e8482a"/><path d="M11 4c2 1 4 1 7 0l-1 5c-3 1-5 1-7 0z" fill="#70b030"/><path d="M1 10c3-1 5 0 7 1l-1 5c-2-1-4-2-7-1z" fill="#3078e0"/><path d="M9.500 11c2 1 4 1 7 0l-1 5c-3 1-5 1-7 0z" fill="#f0c020"/></svg>开始</div>
 <div class="ql">${IE}
  <svg width="17" height="18" viewBox="0 0 17 18"><rect x="1" y="1" width="15" height="16" fill="#eef4ff" stroke="#a0b8e0"/><rect x="3" y="5" width="11" height="8" fill="#2050b0"/><path d="M4 6l2 6 2-4 2 4 3-6" stroke="#fff" fill="none"/></svg>
  <svg width="14" height="20" viewBox="0 0 14 20"><rect x="3" y="1" width="8" height="18" rx="1" fill="#d8e4f4"/><rect x="4" y="3" width="6" height="6" fill="#5090e0"/><rect x="4" y="11" width="6" height="6" fill="#a8b8d0"/></svg>
  <span class="chev">»</span></div>
 <div class="tb"><task-button>指标公式及...</task-button><task-button>超准抄底公...</task-button><task-button i="gear">老钱庄通达...</task-button></div>
 <div class="end">
  <svg width="15" height="14" viewBox="0 0 15 14"><rect x=".5" y="3.500" width="14" height="10" fill="#f4f4ec" stroke="#202020"/><path d="M2 6h11M2 8.500h11" stroke="#606060" stroke-dasharray="1 1"/><path d="M3 11h9" stroke="#606060"/><path d="M2 3V1h11" stroke="#202020" stroke-dasharray="1 1"/></svg>
  <span class="desk" style="margin-left:3px">桌面</span><span class="chev" style="margin-right:5px">»</span>
  <div class="tray"><svg width="18" height="18" viewBox="0 0 18 18" style="margin-left:-9px"><circle cx="9" cy="9" r="8" fill="#4aa0f0" stroke="#b8dcf8"/><path d="M11 5l-4 4 4 4" fill="none" stroke="#fff" stroke-width="2"/></svg>
   <svg width="14" height="17" viewBox="0 0 14 17"><path d="M7 1l6 2v6c0 4-3 6-6 7-3-1-6-3-6-7V3z" fill="#d02020" stroke="#d8d8d8"/><path d="M7 4v8M3.500 8h7" stroke="#fff" stroke-width="2"/></svg>
   <svg width="14" height="17" viewBox="0 0 14 17"><path d="M7 1l6 2v6c0 4-3 6-6 7-3-1-6-3-6-7V3z" fill="#40c020" stroke="#e0e8a0"/><path d="M7 4v8M3.500 8h7" stroke="#e8ffc0" stroke-width="2"/></svg>
   <span class="clock">0:13</span></div></div>`);

/* ---------- app shell ---------- */
def('tdx-app',`:host{display:grid;grid-template-rows:22px 948px 24px 30px;width:1280px;height:1024px;background:#000}
 .mid{display:flex;min-height:0}.c{display:flex;flex-direction:column;width:1060px}.s{display:flex;flex-direction:column;width:195px}`,
 `<app-menubar></app-menubar>
  <div class="mid"><tool-strip></tool-strip>
   <div class="c"><kline-chart></kline-chart><date-strip></date-strip><formula-tabs></formula-tabs></div>
   <div class="s"><quote-panel></quote-panel><side-tabs></side-tabs></div></div>
  <status-bar></status-bar><task-bar></task-bar>`);
</script>
</body></html>
